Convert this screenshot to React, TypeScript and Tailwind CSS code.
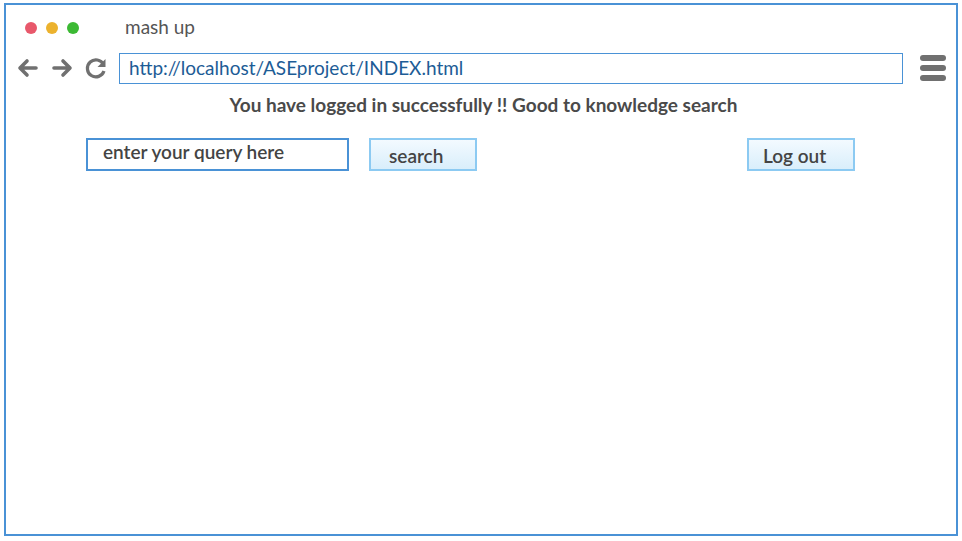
import React from "react";

export default function App() {
  return (
    <div className="w-[962px] h-[541px] bg-white relative" style={{ fontFamily: "Lato, 'Open Sans', sans-serif" }}>
      <div className="absolute left-[4px] top-[3px] w-[954px] h-[533px] border-2 border-[#4a92d6] flex flex-col">
        {/* title bar */}
        <div className="flex items-center h-[46px] pl-[19px]">
          <div className="flex gap-[9px]">
            <span className="w-[12px] h-[12px] rounded-full bg-[#e8586b]" />
            <span className="w-[12px] h-[12px] rounded-full bg-[#ecb22e]" />
            <span className="w-[12px] h-[12px] rounded-full bg-[#3cb934]" />
          </div>
          <span className="ml-[46px] text-[19px] text-[#555] mt-[-2px]">mash up</span>
        </div>
        {/* nav bar */}
        <div className="flex items-center h-[32px] mt-[1px]">
          <svg width="22" height="20" viewBox="0 0 22 20" className="ml-[11px]">
            <path d="M19 10 H4 M10 3 L3 10 L10 17" stroke="#707070" strokeWidth="3.6" fill="none" strokeLinecap="round" strokeLinejoin="round" />
          </svg>
          <svg width="22" height="20" viewBox="0 0 22 20" className="ml-[12px]">
            <path d="M3 10 H18 M12 3 L19 10 L12 17" stroke="#707070" strokeWidth="3.6" fill="none" strokeLinecap="round" strokeLinejoin="round" />
          </svg>
          <svg width="24" height="24" viewBox="0 0 24 24" className="ml-[11px]">
            <path d="M19.5 8.5 A8.5 8.5 0 1 0 20 15" stroke="#707070" strokeWidth="3.2" fill="none" />
            <path d="M21.5 3 L21.5 11 L13.5 11 Z" fill="#707070" />
          </svg>
          <div className="ml-[11px] w-[784px] h-[31px] border border-[#4a92d6] flex items-center pl-[9px] text-[19px] text-[#1d5c96]">
            http://localhost/ASEproject/INDEX.html
          </div>
          <div className="ml-[17px] flex flex-col gap-[4px]">
            <span className="w-[26px] h-[6px] rounded-full bg-[#707070]" />
            <span className="w-[26px] h-[6px] rounded-full bg-[#707070]" />
            <span className="w-[26px] h-[6px] rounded-full bg-[#707070]" />
          </div>
        </div>
        {/* heading */}
        <div className="text-center text-[19px] font-bold text-[#4a4a4a] mt-[10px] pl-[5px] leading-[22px]">
          You have logged in successfully !! Good to knowledge search
        </div>
        {/* controls */}
        <div className="flex items-start mt-[22px]">
          <div className="ml-[80px] w-[263px] h-[33px] border-2 border-[#4a92d6] pl-[15px] text-[19px] font-semibold text-[#444] leading-[24px]">
            enter your query here
          </div>
          <button className="ml-[20px] w-[108px] h-[33px] border-2 border-[#8ccaf2] bg-gradient-to-b from-[#f3faff] to-[#d9eefb] text-left pl-[18px] pt-[2px] text-[19px] font-semibold text-[#444]">
            search
          </button>
          <button className="ml-[270px] w-[108px] h-[33px] border-2 border-[#8ccaf2] bg-gradient-to-b from-[#f3faff] to-[#d9eefb] text-left pl-[14px] pt-[2px] text-[19px] font-semibold text-[#444]">
            Log out
          </button>
        </div>
      </div>
    </div>
  );
}
